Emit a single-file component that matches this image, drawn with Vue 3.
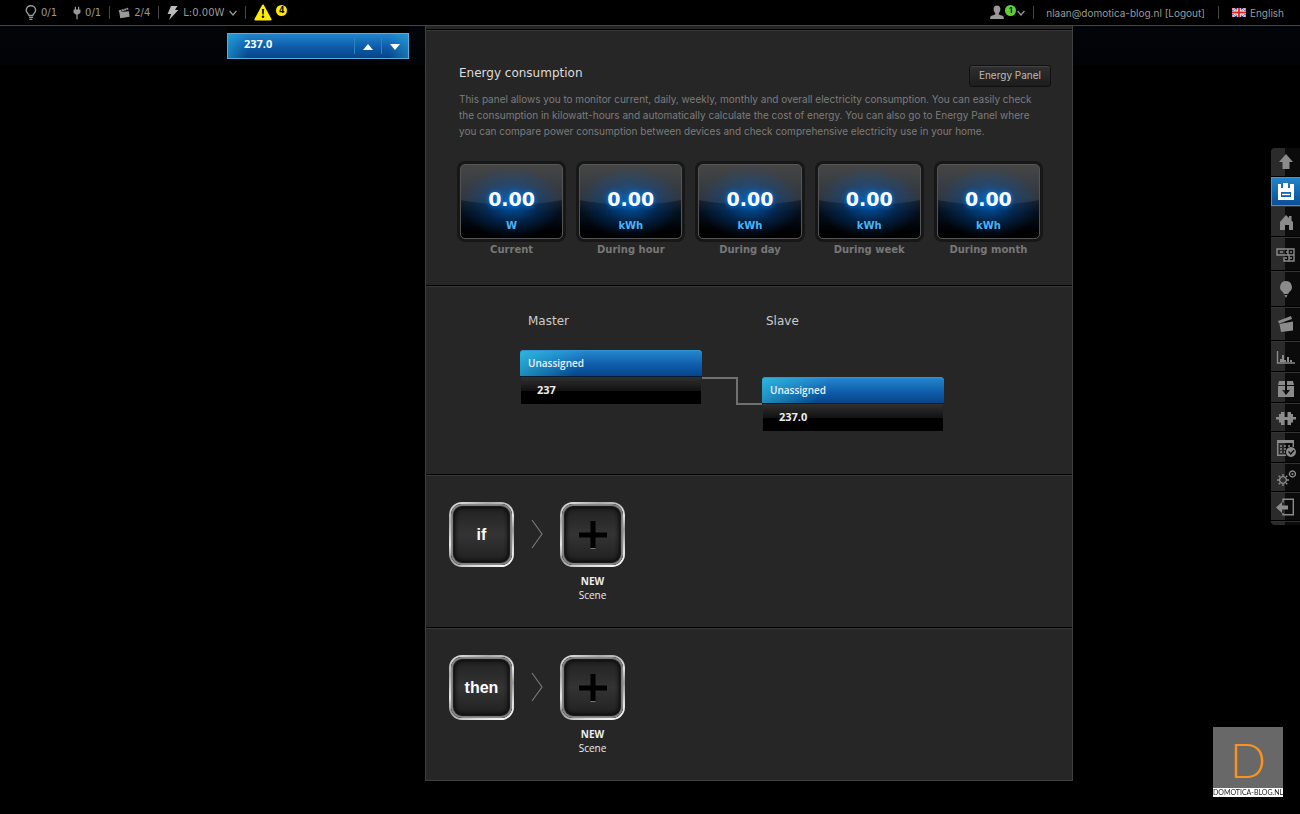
<template>
  <div class="page">
    <header class="topbar">
      <div class="stats">
        <span class="stat bulb">
          <svg width="12" height="16" viewBox="0 0 12 16" fill="none" stroke="#999" stroke-width="1.4">
            <path d="M4 10.5C3.6 8.6 1.2 7.6 1.2 5.2a4.7 4.4 0 0 1 9.4 0c0 2.4-2.4 3.4-2.8 5.3z" />
            <path d="M4 12.4h4M4.4 14.4h3" />
          </svg>
          0/1
        </span>
        <span class="stat plug">
          <svg width="8" height="14" viewBox="0 0 9 14" fill="#999">
            <path d="M2 0h1.4v3h2.2V0H7v3h1.4v3.6L6 8.6H5.2V14H3.8V8.6H3L.6 6.6V3H2z" />
          </svg>
          0/1
        </span>
        <i class="sep"></i>
        <span class="stat scene">
          <svg width="12" height="12" viewBox="0 0 13 12" fill="#999">
            <path d="M.6 3.4 10.8.2l.6 2L1.2 5.2zM1.4 5 11.8 4 12.6 10 2.4 11.8z" />
            <path d="m3.4 2.4 1.2 1.9M6 1.6l1.2 1.9M8.6.8l1.2 1.9" stroke="#111" stroke-width=".7" />
          </svg>
          2/4
        </span>
        <i class="sep"></i>
        <span class="stat power">
          <svg width="12" height="14" viewBox="0 0 12 14" fill="#bbb">
            <path d="M4 0h6.4L8 4h3.4L2 14l2.2-6H.6z" />
          </svg>
          L:0.00W
          <svg width="8" height="6" viewBox="0 0 8 6" fill="none" stroke="#999" stroke-width="1.2">
            <path d="m.6 1 3.4 4 3.4-4" />
          </svg>
        </span>
        <i class="sep"></i>
        <span class="stat alert">
          <svg width="18" height="17" viewBox="0 0 18 17">
            <path d="M9 1.5 16.6 15.4H1.4z" fill="#ffec00" stroke="#ffec00" stroke-width="2" stroke-linejoin="round" />
            <path d="M7.9 5h2.2l-.4 5.6H8.3z" fill="#111" />
            <circle cx="9" cy="12.8" r="1.3" fill="#111" />
          </svg>
          <b class="count yellow">4</b>
        </span>
      </div>
      <div class="account">
        <span class="user">
          <svg width="14" height="15" viewBox="0 0 14 15" fill="#999">
            <path d="M7 .4c2.2 0 3.4 1.5 3.4 3.6 0 1.8-.7 3.2-1.6 4v1.4l4.2 1.7c.7.3.8 1.5.8 3H.2c0-1.5.1-2.7.8-3l4.2-1.7V8c-.9-.8-1.6-2.2-1.6-4C3.6 1.900 4.800.4 7 .4z" />
          </svg>
          <b class="count green">1</b>
          <svg class="caret" width="8" height="6" viewBox="0 0 8 6" fill="none" stroke="#999" stroke-width="1.2">
            <path d="m.6 1 3.4 4 3.4-4" />
          </svg>
        </span>
        <i class="sep"></i>
        <span class="mail">nlaan@domotica-blog.nl <a href="#">[Logout]</a></span>
        <i class="sep"></i>
        <a class="lang" href="#">
          <svg width="14" height="9" viewBox="0 0 14 9">
            <path d="M0 0h14v9H0z" fill="#2a3f8c" />
            <path d="m0 0 14 9M14 0 0 9" stroke="#fff" stroke-width="2" />
            <path d="m0 0 14 9M14 0 0 9" stroke="#d22" stroke-width=".7" />
            <path d="M7 0v9M0 4.5h14" stroke="#fff" stroke-width="3.4" />
            <path d="M7 0v9M0 4.5h14" stroke="#d22" stroke-width="1.8" />
          </svg>
          English
        </a>
      </div>
    </header>

    <div class="layout">
      <aside class="sidebar">
        <div class="device">
          <span>237.0</span>
          <button type="button" aria-label="Move up">
            <svg width="10" height="6" viewBox="0 0 10 6" fill="#fff"><path d="M5 0l5 6H0z" /></svg>
          </button>
          <button type="button" aria-label="Move down">
            <svg width="10" height="6" viewBox="0 0 10 6" fill="#fff"><path d="M0 0h10L5 6z" /></svg>
          </button>
        </div>
      </aside>

      <main class="panel">
        <section class="energy">
          <div class="head">
            <h2>Energy consumption</h2>
            <button type="button" class="energy-btn">Energy Panel</button>
          </div>
          <p>
            This panel allows you to monitor current, daily, weekly, monthly and overall electricity consumption. You
            can easily check the consumption in kilowatt-hours and automatically calculate the cost of energy. You can
            also go to Energy Panel where you can compare power consumption between devices and check comprehensive
            electricity use in your home.
          </p>
          <ul class="meters">
            <li v-for="m in meters" :key="m.label">
              <div class="meter">
                <strong>{{ m.value }}</strong>
                <span>{{ m.unit }}</span>
              </div>
              <div class="meter-label">{{ m.label }}</div>
            </li>
          </ul>
        </section>

        <section class="relations">
          <div class="relation">
            <h2>Master</h2>
            <div class="box">
              <div class="box-head">Unassigned</div>
              <div class="box-row">237</div>
            </div>
          </div>
          <svg class="link" width="60" height="28" viewBox="0 0 60 28" fill="none" stroke="#707070" stroke-width="2">
            <path d="M0 1h35v26h25" />
          </svg>
          <div class="relation slave">
            <h2>Slave</h2>
            <div class="box">
              <div class="box-head">Unassigned</div>
              <div class="box-row">237.0</div>
            </div>
          </div>
        </section>

        <section v-for="rule in rules" :key="rule" class="rule">
          <div class="tile"><span>{{ rule }}</span></div>
          <svg class="arrow" width="12" height="30" viewBox="0 0 12 30" fill="none" stroke="#777" stroke-width="1.2">
            <path d="m1 1 10 14L1 29" />
          </svg>
          <button type="button" class="new-scene">
            <span class="tile">
              <svg width="28" height="28" viewBox="0 0 28 28">
                <path d="M11.5 27.5h5" stroke="#777" />
                <path d="M14 0v27M0 14h28" stroke="#000" stroke-width="5" />
              </svg>
            </span>
            <b>NEW</b>
            <span>Scene</span>
          </button>
        </section>
      </main>
    </div>

    <nav class="tools">
      <button
        v-for="tool in tools"
        :key="tool.name"
        type="button"
        :aria-label="tool.name"
        :class="[tool.size, { active: tool.active }]"
      >
        <svg width="20" height="18" viewBox="0 0 20 18">
          <path :d="tool.fill" fill="currentColor" fill-rule="evenodd" />
          <path :d="tool.line" fill="none" stroke="currentColor" stroke-width="1.4" />
        </svg>
      </button>
    </nav>

    <a class="brand" href="#">
      <span class="letter">D</span>
      <span class="name">DOMOTICA-BLOG.NL</span>
    </a>
  </div>
</template>

<script setup>
const meters = [
  { value: "0.00", unit: "W", label: "Current" },
  { value: "0.00", unit: "kWh", label: "During hour" },
  { value: "0.00", unit: "kWh", label: "During day" },
  { value: "0.00", unit: "kWh", label: "During week" },
  { value: "0.00", unit: "kWh", label: "During month" },
];

const rules = ["if", "then"];

const tools = [
  { name: "Back to top", size: "s", fill: "M10 0l7 8h-3.5v7h-7V8H3z" },
  {
    name: "Save",
    size: "s",
    active: true,
    fill: "M2 1h3v4h2V0h5v5h2V1h4v16H2zM5 9v5h10V9z",
    line: "M6 11.5h8",
  },
  { name: "Home", size: "m", fill: "M10 2l3 3V3h2.5v4.5L17 9v8h-4v-5H9v5H4V9z" },
  {
    name: "Rooms",
    size: "l",
    line: "M1 3h17v6H1zM6 9h12v6H8v-4M4 6h3m3 0h2m2 0h2M9 12h2m2 0h3M12 3v6M13 9v6",
  },
  {
    name: "Devices",
    size: "xl",
    fill: "M10 0a6 6 0 0 1 3.5 10.8L12 13H8l-1.500-2.2A6 6 0 0 1 10 0zM8.500 14h3L10 17z",
  },
  { name: "Scenes", size: "l", fill: "M2 5 15 0l1 3L3 7.5zM3.5 8 17 5.5v9L5 16z" },
  {
    name: "Charts",
    size: "m",
    fill: "M4 11h2v3H4zM6 7h2v7H6zM8 12h2v2H8zM11 9h2v5h-2zM14 12h2v2h-2z",
    line: "M1.5 3v12H19",
  },
  {
    name: "Packages",
    size: "m",
    fill: "M3 2h6v4H2zM11 2h6l1 4h-7zM2 7h7v4H6l4 5 4-5h-3V7h7v11H2z",
  },
  {
    name: "Plugins",
    size: "s",
    fill: "M0 8h3V5h2V3h3.5v5h3V3H15v2h2v3h3v2.5h-3v3h-2V16h-3.5v-5h-3v5H5v-2.5H3v-3H0z",
  },
  {
    name: "Calendar",
    size: "m",
    fill: "M1 1h17v3H1zM15 8a5 5 0 1 1-.1 0zM12 12.7l2.7 3.3 3.9-4.3-1-.9-3 3.2-1.5-2z",
    line: "M10 16.3H1.7V3M17.3 3v5M4 7h2m2 0h2m2 0h2M4 10h2m2 0h2M4 13h2m2 0h1",
  },
  {
    name: "Settings",
    size: "s",
    fill: "M16.5 4a1 1 0 1 1-.1 0z",
    line: "M7 7v-2M7 15v2M3 11H1M11 11h2M4 8 2.7 6.7M10 8l1.3-1.3M4 14l-1.3 1.3M10 14l1.3 1.3M7 7.6a3.4 3.4 0 1 1-.1 0zM16.5 2a3 3 0 1 1-.1 0z",
  },
  {
    name: "Exit",
    size: "s",
    fill: "M0 9.5 6 4v3.500h6v4H6V15z",
    line: "M7 4.5V1.2h10.3v15.600H7V15",
  },
];
</script>

<style>
body {
  background: #000;
}
</style>

<style scoped>
.page {
  min-height: 100vh;
  background: linear-gradient(#02050a, #010306 64px, #000 66px);
  color: #999;
  font-family: "DejaVu Sans", Verdana, sans-serif;
  font-size: 10px;
}
h2,
p,
ul {
  margin: 0;
  padding: 0;
}
button {
  padding: 0;
  border: 0;
  background: none;
  color: inherit;
  font: inherit;
  cursor: pointer;
}
a {
  color: inherit;
  text-decoration: none;
}

.topbar {
  display: flex;
  justify-content: space-between;
  height: 25px;
  padding: 0 16px 0 25px;
  border-bottom: 1px solid #2f4a62;
  background: #000;
}
.stats,
.account,
.stat,
.user,
.lang {
  display: flex;
  align-items: center;
}
.stat {
  gap: 4px;
}
.plug {
  margin-left: 16px;
}
.sep {
  width: 1px;
  height: 13px;
  margin: 0 8px;
  background: #444;
}
.power svg:last-child {
  margin-left: 1px;
}
.account {
  font-family: Inter, sans-serif;
}
.account .sep {
  margin: 0 13px;
}
.account .sep:first-of-type {
  margin: 0 12px 0 0;
}
.user {
  gap: 1px;
  margin-right: 8px;
}
.lang {
  gap: 4px;
}
.count {
  width: 11px;
  height: 11px;
  margin-bottom: 4px;
  border-radius: 50%;
  color: #111;
  font-size: 8px;
  line-height: 11px;
  text-align: center;
}
.yellow {
  background: #ffec00;
}
.green {
  background: #5fd035;
}

.layout {
  display: grid;
  grid-template-columns: 182px minmax(0, 1fr);
  gap: 16px;
  align-items: start;
  max-width: 846px;
  margin: 0 auto;
}
.sidebar {
  padding-top: 7px;
  background: #000;
}
.device {
  display: flex;
  align-items: center;
  height: 24px;
  border: 1px solid #5aaede;
  background: linear-gradient(90deg, rgba(40, 180, 225, 0.5), transparent 20px calc(100% - 20px), rgba(40, 180, 225, 0.4)),
    linear-gradient(#2185cc, #0e5ba8 55%, #074485);
  color: #fff;
  font: bold 11px/18px "Open Sans", sans-serif;
}
.device span {
  flex: 1;
  padding: 0 0 4px 16px;
}
.device button {
  width: 27px;
  height: 16px;
  border-left: 1px solid #2a83c4;
  line-height: 10px;
}

.panel {
  padding-top: 3px;
  border: 1px solid #404040;
  border-top: 0;
  background: #262626;
}
section {
  border-top: 1px solid #000;
  box-shadow: inset 0 1px #373737;
}
h2 {
  color: #ddd;
  font-size: 12px;
  font-weight: normal;
  line-height: 16px;
}

.energy {
  padding: 35px 21px 27px 33px;
}
.head {
  display: flex;
  justify-content: space-between;
  align-items: flex-start;
}
.energy-btn {
  height: 22px;
  padding: 0 9px 3px;
  border: 1px solid #111;
  border-radius: 3px;
  background: linear-gradient(#303030, #1c1c1c);
  box-shadow: inset 0 1px #444;
  color: #bbb;
  font-family: Inter, sans-serif;
}
.energy p {
  margin-top: 4px;
  padding-right: 10px;
  color: #7c7c7c;
  font-family: Inter, sans-serif;
  line-height: 16px;
}
.meters {
  display: grid;
  grid-template-columns: repeat(5, 1fr);
  gap: 16px;
  margin: 25px 11px 0 1px;
  list-style: none;
}
.meter {
  display: flex;
  flex-direction: column;
  align-items: center;
  box-sizing: border-box;
  height: 75px;
  padding-top: 22px;
  border: 1px solid #555;
  border-radius: 5px;
  background: radial-gradient(ellipse 50px 36px at 50% 52%, rgba(0, 110, 215, 0.75), rgba(0, 90, 190, 0.3) 55%, transparent),
    radial-gradient(ellipse 110px 40px at 50% 0, rgba(255, 255, 255, 0.09) 98%, transparent 100%),
    linear-gradient(#333, #1c242d 45%, #04101e 65%, #000 92%);
  box-shadow: 0 0 0 3px #171717;
}
.meter strong {
  color: #fff;
  font-size: 19px;
  line-height: 24px;
  text-shadow: 0 0 5px #0080ff;
}
.meter span {
  margin-top: 7px;
  color: #4ab3f5;
  font-weight: bold;
  line-height: 16px;
}
.meter-label {
  margin-top: 3px;
  color: #777;
  font-weight: bold;
  line-height: 16px;
  text-align: center;
}

.relations {
  display: flex;
  align-items: flex-start;
  padding: 27px 94px 43px;
}
.relation {
  width: 182px;
}
.relation h2 {
  padding-left: 8px;
  color: #ccc;
}
.relation.slave h2 {
  padding-left: 4px;
}
.box {
  margin-top: 21px;
  font: bold 11px/26px "Open Sans", sans-serif;
}
.slave .box {
  margin-top: 48px;
}
.box-head {
  height: 26px;
  padding-left: 8px;
  border-bottom: 1px solid #021a33;
  border-radius: 4px 4px 0 0;
  background: linear-gradient(120deg, rgba(50, 200, 225, 0.7), transparent 60px),
    linear-gradient(#2489d0, #0f5ba9 60%, #064589);
  box-shadow: inset 0 1px #2f94d2;
  color: #e8f2fa;
  font-size: 10px;
  font-weight: 600;
}
.box-row {
  height: 27px;
  margin: 0 1px;
  padding-left: 16px;
  background: linear-gradient(#303030, #121212 50%, #000 52%);
  color: #eee;
  line-height: 25px;
}
.link {
  margin-top: 64px;
}

.rule {
  display: flex;
  align-items: flex-start;
  padding: 27px 23px 25px;
}
.tile {
  display: flex;
  justify-content: center;
  align-items: center;
  box-sizing: border-box;
  width: 65px;
  height: 65px;
  border: 2px solid transparent;
  border-radius: 13px;
  background: linear-gradient(#202020, #343434 50%, #1e1e1e) padding-box,
    linear-gradient(155deg, #eee, #aaa 20%, #e6e6e6 45%, #999 60%, #ddd 80%, #fff) border-box;
  box-shadow: inset 0 0 1px 2px #888, inset 0 0 4px 4px #080808;
  color: #fff;
  font: bold 16px "Liberation Sans", Arial, sans-serif;
}
.arrow {
  margin: 17px 17px 0;
}
.new-scene {
  display: flex;
  flex-direction: column;
  align-items: center;
  color: #eee;
  font: 10px/14px "Open Sans", sans-serif;
}
.new-scene b {
  margin-top: 7px;
}

.tools {
  position: fixed;
  top: 148px;
  right: 0;
  display: flex;
  flex-direction: column;
  width: 29px;
  padding-bottom: 4px;
  border-radius: 4px 0 0 4px;
  background: linear-gradient(90deg, #2b2b2b 14px, #0b0b0b 14px);
}
.tools button {
  display: flex;
  justify-content: center;
  align-items: center;
  box-sizing: border-box;
  padding-top: 2px;
  border-bottom: 1px solid #000;
  box-shadow: 0 1px #333;
  color: #8b8b8b;
}
.tools .s {
  height: 29px;
}
.tools .m {
  height: 31px;
}
.tools .l {
  height: 34px;
}
.tools .xl {
  height: 36px;
}
.tools .active {
  padding-top: 0;
  border: 1px solid #2aa0dc;
  border-right: 0;
  background: linear-gradient(#2383c8, #0a4f96);
  color: #fff;
}

.brand {
  position: fixed;
  right: 17px;
  bottom: 17px;
  display: flex;
  flex-direction: column;
  width: 70px;
  background: #686868;
  text-align: center;
}
.letter {
  padding-top: 5px;
  color: #f7931e;
  font: 300 48px/56px Lato, sans-serif;
}
.name {
  background: #fff;
  color: #222;
  font: 7px/9px Lato, sans-serif;
  white-space: nowrap;
}
</style>
